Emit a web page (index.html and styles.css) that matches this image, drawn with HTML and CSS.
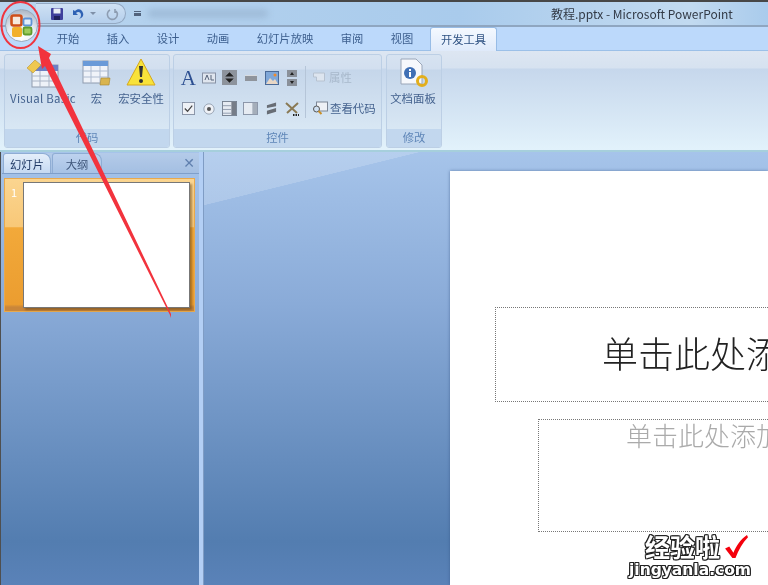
FILE: index.html
```html
<!DOCTYPE html>
<html lang="zh">
<head>
<meta charset="utf-8">
<title>教程.pptx - Microsoft PowerPoint</title>
<link rel="stylesheet" href="styles.css">
</head>
<body>
<div class="app">
  <header class="titlebar">
    <div class="qat">
      <svg class="qat-icon" viewBox="0 0 14 14" width="14" height="14"><rect x="1" y="1" width="12" height="12" rx="1" fill="#3f3f9c"/><rect x="3.5" y="1.5" width="7" height="5" fill="#e8edf6"/><rect x="4" y="9" width="6" height="4" fill="#20205e"/></svg>
      <svg class="qat-icon" viewBox="0 0 14 14" width="14" height="14"><path d="M2 3v5h5L5 6c2-2 5-1 5 2 0 2-1 3-2 4 3-1 5-3 4-6C11 2 7 1 4 4z" fill="#2f62b4"/></svg>
      <span class="qat-drop"></span>
      <svg class="qat-icon qat-redo" viewBox="0 0 14 14" width="14" height="14"><path d="M10 2v4M11 4a5 5 0 1 1-6-1" fill="none" stroke="#8d9db2" stroke-width="1.6"/></svg>
    </div>
    <span class="qat-more"></span>
    <span class="smear"></span>
    <span class="doc-title">教程.pptx - Microsoft PowerPoint</span>
  </header>

  <nav class="tabs">
    <span class="tab">开始</span>
    <span class="tab">插入</span>
    <span class="tab">设计</span>
    <span class="tab">动画</span>
    <span class="tab tab-wide">幻灯片放映</span>
    <span class="tab">审阅</span>
    <span class="tab">视图</span>
    <span class="tab tab-active">开发工具</span>
  </nav>

  <section class="ribbon">
    <div class="group group-code">
      <div class="group-body big-row">
        <div class="big vb">
          <svg viewBox="0 0 34 30" width="34" height="30"><rect x="6" y="7" width="26" height="22" fill="#eef2f8" stroke="#8f9bae"/><rect x="6" y="7" width="26" height="6" fill="#6d7fc4"/><path d="M6 18h26M6 23h26M14 13v16M23 13v16" stroke="#a9b4c6"/><path d="M1 10l8-8 6 5-8 8z" fill="#efc84f" stroke="#b99432" stroke-width=".6"/></svg>
          <span class="big-label vb-label">Visual Basic</span>
        </div>
        <div class="big macro">
          <svg viewBox="0 0 30 30" width="30" height="30"><rect x="1" y="3" width="25" height="22" fill="#f0f3f9" stroke="#8f9bae"/><rect x="1" y="3" width="25" height="5" fill="#6a9ad8"/><path d="M1 13h25M1 19h25M9 8v17M18 8v17" stroke="#aebbd0"/><path d="M19 20h9l-1 7h-9z" fill="#d9b44e" stroke="#a5852f" stroke-width=".6"/></svg>
          <span class="big-label">宏</span>
        </div>
        <div class="big security">
          <svg viewBox="0 0 30 30" width="30" height="30"><path d="M15 1L29 27H1z" fill="#f8e23a" stroke="#d6a81c" stroke-linejoin="round"/><path d="M13 8h4l-1 11h-2z" fill="#333"/><circle cx="15" cy="23" r="2" fill="#333"/></svg>
          <span class="big-label">宏安全性</span>
        </div>
      </div>
      <div class="group-label">代码</div>
    </div>

    <div class="group group-controls">
      <div class="group-body controls-row">
        <div class="icon-grid">
          <span class="glyph-a">A</span>
          <svg viewBox="0 0 14 14" width="14" height="14"><rect x=".5" y="2" width="13" height="10" fill="#dfe5ee" stroke="#8792a5"/><path d="M3 9l2-5 2 5M9 4v5h3" fill="none" stroke="#57647a"/></svg>
          <svg viewBox="0 0 14 14" width="15" height="15"><rect width="14" height="14" fill="#8d939c"/><path d="M7 2l4 4H3zM7 12l4-4H3z" fill="#222"/></svg>
          <svg viewBox="0 0 14 14" width="14" height="14"><path d="M1 4h12v6H1z" fill="#8f949c"/><path d="M1 4h12v1H1z" fill="#d7dbe0"/></svg>
          <svg viewBox="0 0 14 14" width="14" height="14"><rect x=".5" y=".5" width="13" height="13" fill="#7fa7d8" stroke="#4a6a98"/><path d="M1 13l4-6 3 3 2-2 3 5z" fill="#e8d7c6"/><circle cx="10" cy="4" r="1.5" fill="#f08a2a"/></svg>
          <svg viewBox="0 0 10 16" width="10" height="16"><rect width="10" height="7" fill="#8a9099"/><rect y="9" width="10" height="7" fill="#8a9099"/><path d="M5 2l2 3H3zM5 14l2-3H3z" fill="#222"/></svg>
          <svg viewBox="0 0 14 14" width="13" height="13"><rect x=".5" y=".5" width="13" height="13" fill="#eef1f6" stroke="#8792a5"/><path d="M3 7l3 3 5-6" fill="none" stroke="#444" stroke-width="1.3"/></svg>
          <svg viewBox="0 0 14 14" width="12" height="12"><circle cx="7" cy="7" r="6" fill="#eef1f6" stroke="#8f9aac"/><circle cx="7" cy="7" r="2.4" fill="#555"/></svg>
          <svg viewBox="0 0 16 16" width="15" height="15"><rect x=".5" y=".5" width="15" height="15" fill="#e6ebf2" stroke="#75808f"/><rect x="10" y="1" width="5" height="14" fill="#767d88"/><path d="M1 5h9M1 9h9M1 13h9" stroke="#8f9aac"/></svg>
          <svg viewBox="0 0 16 14" width="15" height="13"><rect x=".5" y=".5" width="15" height="13" fill="#e6ebf2" stroke="#8792a5"/><rect x="10" y="1" width="5" height="12" fill="#a5aeba"/></svg>
          <svg viewBox="0 0 12 14" width="11" height="14"><path d="M1 3l10-3v4L1 6zM1 9l10-3v4L1 13z" fill="#686d75"/></svg>
          <svg viewBox="0 0 16 16" width="16" height="16"><path d="M2 2l11 10M14 2L3 12" stroke="#8a7a55" stroke-width="2"/><path d="M9 14h6" stroke="#222" stroke-width="2" stroke-dasharray="1.5 1"/></svg>
        </div>
        <div class="control-sep"></div>
        <div class="side-cmds">
          <div class="side-cmd disabled">
            <svg viewBox="0 0 16 14" width="17" height="14"><path d="M2 3h11v8H5V7H2z" fill="#dde5ef" stroke="#b7c2d0"/></svg>
            <span>属性</span>
          </div>
          <div class="side-cmd">
            <svg viewBox="0 0 17 14" width="18" height="14"><rect x="5" y="1" width="11" height="9" fill="#eef1f6" stroke="#7d8796"/><circle cx="5" cy="8" r="3" fill="#cfe0f2" stroke="#555"/><path d="M7 10l3 3" stroke="#c98f28" stroke-width="2"/></svg>
            <span>查看代码</span>
          </div>
        </div>
      </div>
      <div class="group-label">控件</div>
    </div>

    <div class="group group-modify">
      <div class="group-body big-row">
        <div class="big panel">
          <svg viewBox="0 0 30 30" width="30" height="30"><path d="M3 1h15l6 6v19H3z" fill="#f6f8fc" stroke="#9aa6b8"/><circle cx="12" cy="15" r="6" fill="#3f6fb5"/><rect x="11" y="14" width="2" height="5" fill="#fff"/><rect x="11" y="11" width="2" height="2" fill="#fff"/><circle cx="24" cy="23" r="4.5" fill="none" stroke="#e2ae1c" stroke-width="3"/></svg>
          <span class="big-label">文档面板</span>
        </div>
      </div>
      <div class="group-label">修改</div>
    </div>
  </section>

  <main class="workspace">
    <aside class="sidebar">
      <div class="side-tabs">
        <span class="side-tab side-tab-active">幻灯片</span>
        <span class="side-tab">大纲</span>
        <span class="side-close">✕</span>
      </div>
      <div class="thumb">
        <span class="thumb-num">1</span>
        <div class="thumb-slide"></div>
      </div>
    </aside>
    <div class="splitter"></div>
    <div class="stage">
      <div class="slide">
        <div class="ph ph-title">单击此处添加标题</div>
        <div class="ph ph-sub">单击此处添加副标题</div>
      </div>
    </div>
  </main>

  <div class="office-btn">
    <svg viewBox="0 0 24 24" width="24" height="24"><rect x="1.5" y="1.5" width="10" height="10" rx="2" fill="#f6e9dc" stroke="#cf4f18" stroke-width="2.6"/><rect x="13.5" y="4.5" width="8" height="7" rx="1.5" fill="#e4eefa" stroke="#5e93d6" stroke-width="1.8"/><rect x="2" y="13" width="10" height="10" rx="2" fill="#f2b02a"/><rect x="13.5" y="13.5" width="8" height="7" rx="1.5" fill="#9ccb5c" stroke="#5f9c2c" stroke-width="1.8"/></svg>
  </div>

  <svg class="annot" viewBox="0 0 768 585" width="768" height="585">
    <ellipse cx="20.5" cy="25" rx="19" ry="23" fill="none" stroke="#f0353f" stroke-width="2"/>
    <polygon points="38,46 51,54 49,58 171,314 171,318 170,315 45,66 42,69" fill="#f2333d"/>
  </svg>

  <div class="watermark">
    <div class="wm-top"><span class="wm-cn">经验啦</span><svg viewBox="0 0 24 24" width="25" height="25"><path d="M2 14l4-2 4 6C13 11 17 5 23 1l1 2c-5 5-9 12-12 20h-3z" fill="#f4000c"/></svg></div>
    <div class="wm-en">jingyanla.com</div>
  </div>
</div>
</body>
</html>
```
FILE: styles.css
```css
* { box-sizing: border-box; }
html, body { margin: 0; padding: 0; }
body { width: 768px; height: 585px; overflow: hidden; background: #fff; }
.app {
  position: relative;
  width: 768px;
  height: 585px;
  overflow: hidden;
  display: flex;
  flex-direction: column;
  font-family: "Noto Sans CJK SC", "Liberation Sans", sans-serif;
  filter: blur(0.45px);
}

/* title bar */
.titlebar {
  height: 27px;
  flex: none;
  border-top: 2px solid #474747;
  border-bottom: 2px solid #8fa6c0;
  background: linear-gradient(90deg, #b8d4ee 0, #a9cbec 60%, #c2daf0 90%, #a9cbec 100%);
  display: flex;
  align-items: center;
  padding-left: 36px;
}
.qat {
  width: 90px;
  height: 21px;
  border: 1px solid #93a8c2;
  border-left: none;
  border-radius: 0 11px 11px 0;
  background: linear-gradient(#cfe1f4, #b5cfec);
  display: flex;
  align-items: center;
  gap: 7px;
  padding-left: 14px;
}
.qat-icon { flex: none; }
.qat-drop { width: 0; height: 0; border: 3px solid transparent; border-top-color: #7f90a8; margin: 3px -2px 0 -2px; }
.qat-redo { margin-left: 4px; }
.qat-more { width: 7px; height: 5px; margin-left: 8px; border-top: 1px solid #52637c; border-bottom: 3px solid #52637c; }
.smear { width: 120px; height: 9px; margin-left: 7px; border-radius: 4px; background: #9fbcd9; filter: blur(3px); }
.doc-title { margin-left: 283px; font-size: 12px; line-height: 16px; color: #333b47; white-space: nowrap; }

/* tabs */
.tabs {
  height: 24px;
  flex: none;
  display: flex;
  align-items: stretch;
  padding-left: 43px;
  background: #bcd9fb;
  border-bottom: 1px solid #9cc0e8;
}
.tab {
  width: 50px;
  text-align: center;
  font-size: 11.3px;
  line-height: 23px;
  color: #3d5f8e;
}
.tab-wide { width: 84px; margin-left: 0; }
.tab-active {
  width: 67px;
  margin-left: 3px;
  margin-bottom: -1px;
  background: linear-gradient(#f4f9ff, #dfeafa);
  border: 1px solid #97bce6;
  border-bottom: none;
  border-radius: 3px 3px 0 0;
  color: #2f5282;
}

/* ribbon */
.ribbon {
  height: 101px;
  flex: none;
  display: flex;
  gap: 3px;
  padding: 3px 0 2px 4px;
  background: linear-gradient(#dde6f2 0, #d6e2f0 17px, #c6d7ec 18px, #e2f2fb 100%);
  border-bottom: 2px solid #a6cfdc;
}
.group {
  display: flex;
  flex-direction: column;
  border: 1px solid #bccfe5;
  border-radius: 3px;
  background: linear-gradient(#d7e3f1 0, #d2dfef 14px, #c5d6ea 15px, #deecf7 100%);
  overflow: hidden;
}
.group-code { width: 166px; }
.group-controls { width: 209px; }
.group-modify { width: 56px; margin-left: 1px; }
.group-body { flex: 1; min-height: 0; }
.group-label {
  height: 18px;
  flex: none;
  text-align: center;
  font-size: 11.3px;
  line-height: 17px;
  color: #5f86b8;
  background: #c2d7ee;
}
.big-row { display: flex; padding-top: 3px; }
.big { display: flex; flex-direction: column; align-items: center; }
.big-label { margin-top: 2px; font-size: 11.4px; line-height: 16px; color: #44628e; white-space: nowrap; }
.vb-label { letter-spacing: .3px; }
.vb { width: 66px; margin-left: 5px; }
.macro { width: 43px; margin-left: -1px; }
.security { width: 46px; margin-left: 0; }
.panel { width: 54px; margin-left: -1px; }

.controls-row { display: flex; align-items: flex-start; padding: 7px 0 0 4px; }
.icon-grid {
  width: 124px;
  display: grid;
  grid-template-columns: repeat(6, 20.8px);
  grid-auto-rows: 31px;
  justify-items: center;
  align-items: center;
}
.glyph-a { font-family: "Liberation Serif", serif; font-size: 21px; line-height: 24px; color: #2c4f91; }
.control-sep { width: 1px; height: 52px; margin: 4px 5px 0 3px; background: #b5c5d8; }
.side-cmds { display: flex; flex-direction: column; gap: 12px; padding-top: 5px; }
.side-cmd { display: flex; align-items: center; gap: 1px; height: 19px; font-size: 11.4px; color: #44628e; white-space: nowrap; }
.side-cmd.disabled { color: #a8b8cb; }

/* workspace */
.workspace {
  flex: 1;
  min-height: 0;
  display: flex;
  background: linear-gradient(#a6c4ea 0, #8aabd8 35%, #537db0 90%, #5a82b8 100%);
}
.sidebar { width: 199px; flex: none; padding: 1px 0 0 1px; border-left: 1px solid #4f4f4f; }
.side-tabs {
  position: relative;
  height: 21px;
  display: flex;
  padding-left: 1px;
  background: linear-gradient(#b4cbe9, #a4bfe2);
  border-bottom: 1px solid #7f9fca;
}
.side-tab {
  width: 50px;
  height: 20px;
  text-align: center;
  font-size: 11.3px;
  line-height: 20px;
  color: #3d5478;
  background: linear-gradient(#bdd2ee, #a7c2e5);
  border: 1px solid #8fadd4;
  border-bottom: none;
  border-radius: 3px 8px 0 0;
}
.side-tab-active { width: 48px; margin-right: 1px; color: #1f3864; background: linear-gradient(#e4eefa, #c5d9f2); }
.side-close {
  position: absolute;
  right: 4px;
  top: 0;
  font-size: 14px;
  line-height: 20px;
  color: #5f7fae;
  font-family: "DejaVu Sans", sans-serif;
}
.thumb {
  width: 191px;
  height: 134px;
  margin: 4px 0 0 2px;
  display: flex;
  padding: 3px 4px 3px 0;
  border: 1px solid #e8a94e;
  background: linear-gradient(#fbd590 0, #f8c878 36%, #f2a93a 37%, #eb9d30 95%, #c9863a 97%);
}
.thumb-num { width: 18px; padding: 3px 0 0 6px; font-size: 11px; line-height: 14px; color: #fff; }
.thumb-slide { flex: 1; background: #fff; border: 1px solid #777; box-shadow: 2px 2px 2px rgba(90, 60, 20, .5); }

.splitter {
  width: 5px;
  flex: none;
  background: #b3cff5;
  border-right: 1px solid #7f9cc4;
}
.stage {
  flex: 1;
  min-width: 0;
  padding: 19px 0 0 246px;
  background: linear-gradient(to bottom right, rgba(255, 255, 255, .18) 50%, transparent 50.4%) 0 0 / 215px 53px no-repeat;
}
.slide { height: 100%; background: #fff; padding: 136px 0 0 45px; overflow: hidden; box-shadow: 0 0 3px rgba(50, 80, 130, .6); }
.ph { border: 1px dotted #777; border-right: none; white-space: nowrap; overflow: hidden; }
.ph-title {
  height: 95px;
  padding: 19px 0 0 106px;
  font-size: 36px;
  line-height: 50px;
  color: #222;
  font-weight: 300;
}
.ph-sub {
  height: 113px;
  margin: 17px 0 0 43px;
  padding: 0 0 0 87px;
  font-size: 26px;
  line-height: 30px;
  color: #aaa;
  font-weight: 300;
}

/* overlays */
.office-btn {
  position: absolute;
  left: 5px;
  top: 9px;
  width: 33px;
  height: 33px;
  border-radius: 50%;
  display: flex;
  align-items: center;
  justify-content: center;
  background: radial-gradient(circle at 50% 85%, #fff 0, #e8eef5 45%, #98a4b4 100%);
  border: 1px solid #9aa9bb;
}
.annot { position: absolute; left: 0; top: 0; pointer-events: none; }
.watermark {
  position: absolute;
  left: 626px;
  top: 531px;
  width: 130px;
  color: #fff;
  text-shadow: 1px 0 #222, -1px 0 #222, 0 1px #222, 0 -1px #222, 1px 1px #222, -1px -1px #222, 1px -1px #222, -1px 1px #222;
}
.wm-top { display: flex; align-items: center; justify-content: flex-start; padding-left: 19px; height: 30px; gap: 3px; }
.wm-cn { font-size: 25px; line-height: 30px; font-weight: 700; }
.wm-en { font-family: "DejaVu Sans", sans-serif; font-size: 15.5px; line-height: 18px; font-weight: 700; white-space: nowrap; margin-left: 3px; }
```
